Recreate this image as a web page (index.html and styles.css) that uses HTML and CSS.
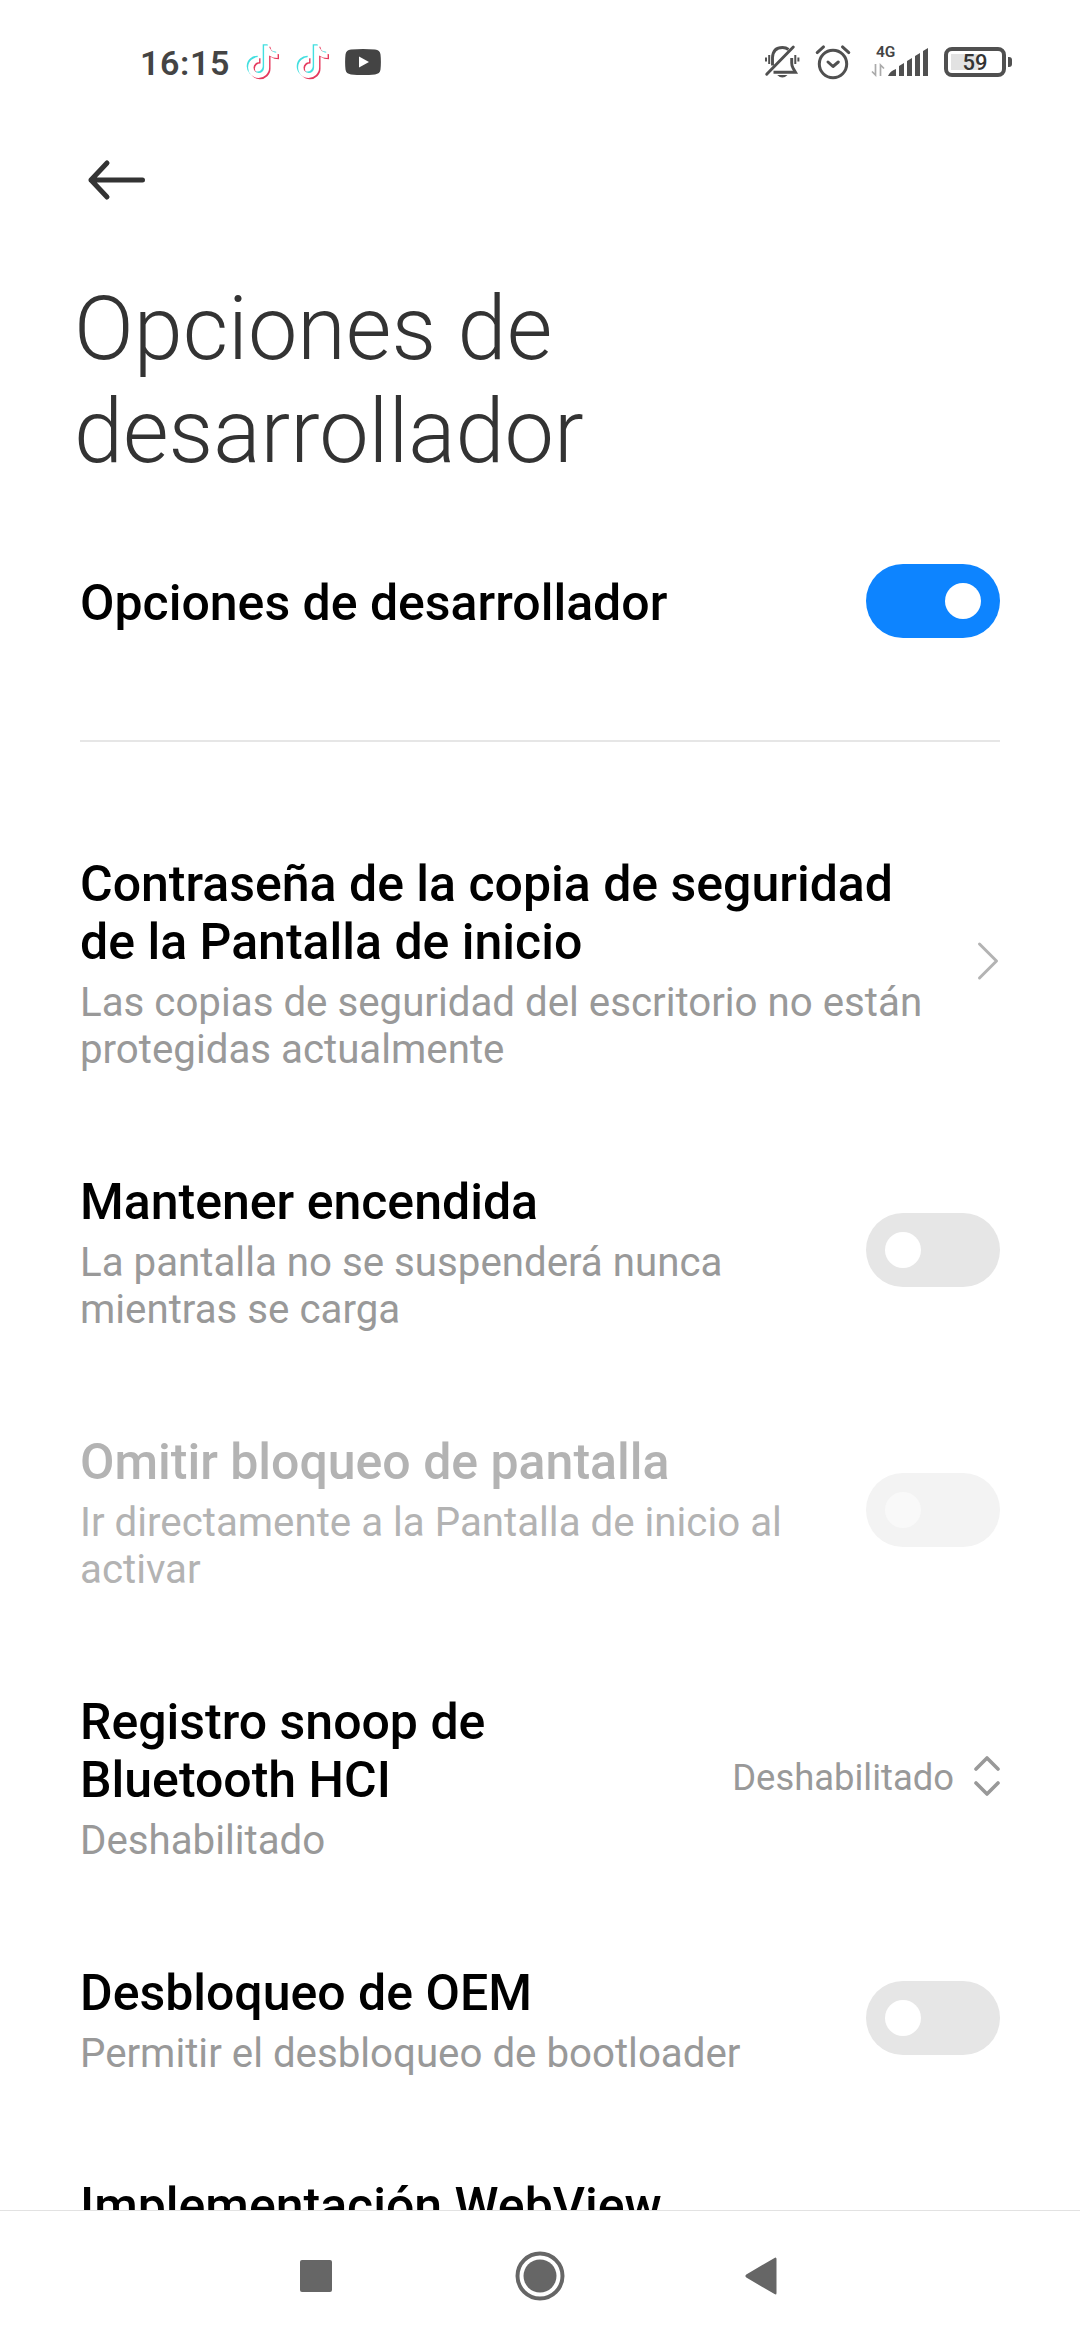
FILE: index.html
```html
<!DOCTYPE html>
<html lang="es">
<head>
<meta charset="utf-8">
<title>Opciones de desarrollador</title>
<link rel="stylesheet" href="styles.css">
</head>
<body>
<header class="status">
  <span class="clock">16:15</span>
  <svg class="tiktok" viewBox="0 0 34 38">
    <defs><path id="note" d="M18 2.500h4.800q1 6.500 8.700 7.500v5q-5 0-8.500-2.600v12.100a10.500 10.500 0 1 1-10-10.500v5.200a5.300 5.300 0 1 0 5 5.300z"/></defs>
    <use href="#note" x="-1.300" y="-1.200" fill="#43dfe0"/>
    <use href="#note" x="1.500" y="1.300" fill="#e5395d"/>
    <use href="#note" x="0.100" y="0.100" fill="#fff"/>
  </svg>
  <svg class="tiktok" viewBox="0 0 34 38">
    <use href="#note" x="-1.300" y="-1.200" fill="#43dfe0"/>
    <use href="#note" x="1.500" y="1.300" fill="#e5395d"/>
    <use href="#note" x="0.100" y="0.100" fill="#fff"/>
  </svg>
  <svg class="youtube" viewBox="0 0 36 26">
    <path d="M6 .6q12-1.2 24 0 5 .4 5.500 5 .8 7.400 0 15-.5 4.400-5.500 4.800-12 1.200-24 0-5-.4-5.500-4.800-.8-7.600 0-15 .5-4.600 5.500-5z" fill="#444"/>
    <path d="M14 7.500l10 5.500-10 5.500z" fill="#fff"/>
  </svg>
  <span class="spacer"></span>
  <svg class="bell" viewBox="0 0 36 36" fill="none" stroke="#505050" stroke-width="2.900">
    <path d="M8.500 21.500V13.500Q9 3.500 18.500 3.500q3.500 0 6 2M27.700 14v5q0 3 1.300 5l2.500 4.200H9.500"/>
    <path d="M2.700 30.200L29.300 3" stroke-linecap="round"/>
    <path d="M2 13.500v4M5.200 11v9M31.300 11v9M34.400 13.500v4" stroke-width="2"/>
    <path d="M13.200 31h10.300q-5.100 5-10.300 0z" fill="#505050" stroke="none"/>
  </svg>
  <svg class="alarm" viewBox="0 0 36 36" fill="none" stroke="#505050" stroke-width="3" stroke-linecap="round" stroke-linejoin="round">
    <circle cx="18" cy="20" r="13.700"/>
    <path d="M13 18l5 4.500 5.300-4.500M2.200 8.600l6.300-5.700M33.800 8.600l-6.300-5.700"/>
  </svg>
  <div class="signal">
    <span class="net">4G</span>
    <svg viewBox="0 0 58 30">
      <path d="M4.500 17v11L1 24.500M9.500 29V18l3.500 3.500" fill="none" stroke="#aaa" stroke-width="1.700"/>
      <path d="M17 29q2-5 8-7v7zM28 19l5-3v13h-5zM36 14l5-3v18h-5zM44 9l5-3v23h-5zM52 4l5-3v28h-5z" fill="#505050"/>
    </svg>
  </div>
  <div class="battery"><span>59</span></div>
</header>

<div class="toolbar">
  <svg class="back" viewBox="0 0 60 44" fill="none" stroke="#333" stroke-width="5" stroke-linecap="round" stroke-linejoin="round">
    <path d="M56.500 22H5M21 5L5 22l16 17"/>
  </svg>
</div>
<h1>Opciones de desarrollador</h1>

<main>
  <section class="row master">
    <div class="text"><h2>Opciones de desarrollador</h2></div>
    <span class="switch on"></span>
  </section>
  <hr>
  <section class="row">
    <div class="text">
      <h2>Contraseña de la copia de seguridad de la Pantalla de inicio</h2>
      <p>Las copias de seguridad del escritorio no están protegidas actualmente</p>
    </div>
    <svg class="chevron" viewBox="0 0 24 40" fill="none" stroke="#b3b3b3" stroke-width="3" stroke-linecap="round" stroke-linejoin="round"><path d="M3.500 3l17 17-17 17"/></svg>
  </section>
  <section class="row">
    <div class="text">
      <h2>Mantener encendida</h2>
      <p>La pantalla no se suspenderá nunca mientras se carga</p>
    </div>
    <span class="switch"></span>
  </section>
  <section class="row disabled">
    <div class="text">
      <h2>Omitir bloqueo de pantalla</h2>
      <p>Ir directamente a la Pantalla de inicio al activar</p>
    </div>
    <span class="switch"></span>
  </section>
  <section class="row choice">
    <div class="text">
      <h2>Registro snoop de Bluetooth HCI</h2>
      <p>Deshabilitado</p>
    </div>
    <span class="value">Deshabilitado</span>
    <svg class="updown" viewBox="0 0 26 42" fill="none" stroke="#999" stroke-width="3.600" stroke-linecap="round" stroke-linejoin="round"><path d="M2 14L13 3l11 11M2 28l11 11 11-11"/></svg>
  </section>
  <section class="row">
    <div class="text">
      <h2>Desbloqueo de OEM</h2>
      <p>Permitir el desbloqueo de bootloader</p>
    </div>
    <span class="switch"></span>
  </section>
  <section class="row">
    <div class="text"><h2>Implementación WebView</h2></div>
  </section>
</main>

<nav>
  <svg class="recents" viewBox="0 0 32 32"><rect width="32" height="32" rx="2" fill="#666"/></svg>
  <svg class="home" viewBox="0 0 50 50"><circle cx="25" cy="25" r="22.500" fill="none" stroke="#666" stroke-width="4"/><circle cx="25" cy="25" r="16.500" fill="#666"/></svg>
  <svg class="prev" viewBox="0 0 32 38"><path d="M29.500.9Q31.500-.3 31.500 2v34q0 2.300-2 1.100L1.300 20.500q-1.800-1.500 0-3z" fill="#666"/></svg>
</nav>
</body>
</html>
```
FILE: styles.css
```css
* { box-sizing: border-box; }
body {
  margin: 0;
  width: 1080px;
  height: 2340px;
  display: flex;
  flex-direction: column;
  overflow: hidden;
  background: #fff;
  color: #000;
  font-family: Roboto, sans-serif;
}
svg { display: block; flex: none; }

.status {
  flex: none;
  height: 124px;
  padding: 0 68px 0 140px;
  display: flex;
  align-items: center;
}
.clock {
  width: 106px;
  font-size: 34px;
  font-weight: 600;
  letter-spacing: 0.6px;
  line-height: 40px;
  padding-top: 1px;
  color: #444;
}
.tiktok { width: 34px; height: 38px; margin-right: 16px; }
.youtube { width: 36px; height: 26px; margin-left: -1px; }
.spacer { flex: 1; }
.bell { width: 36px; height: 36px; margin-right: 15px; }
.alarm { width: 36px; height: 36px; margin-right: 20px; }
.signal { position: relative; width: 58px; height: 30px; margin-right: 15px; }
.signal svg { width: 58px; height: 30px; }
.net {
  position: absolute;
  left: 5px;
  top: -4px;
  font-size: 15.5px;
  line-height: 18px;
  font-weight: 600;
  color: #444;
}
.battery {
  position: relative;
  width: 62px;
  height: 30px;
  margin-right: 6px;
  border: 4px solid #505050;
  border-radius: 8px;
  background: linear-gradient(#e2e2e2, #e2e2e2) 3px 3px / 28px 16px no-repeat;
  text-align: center;
  font-size: 22px;
  line-height: 24px;
  font-weight: 500;
  color: #333;
}
.battery::after {
  content: "";
  position: absolute;
  right: -10px;
  top: 6px;
  width: 4px;
  height: 10px;
  border-radius: 0 3px 3px 0;
  background: #505050;
}

.toolbar { flex: none; height: 154px; padding: 34px 86px 0; }
.back { width: 60px; height: 44px; }

h1 {
  flex: none;
  margin: 0 0 1px;
  width: 700px;
  padding-left: 74px;
  font-size: 88.2px;
  line-height: 103px;
  font-weight: 300;
  color: #333;
}

main { flex: 1; min-height: 0; overflow: hidden; padding: 0 80px; }
.row { display: flex; align-items: center; padding: 47px 0; }
.text { flex: 1; margin-top: 6px; padding-right: 60px; }
.text:has(+ .chevron) { padding-right: 40px; }
.master { padding: 79px 0 102px; }
.master .text { margin-top: 4px; }
hr { height: 2px; margin: 0 0 60px; border: 0; background: #e6e6e6; }
h2 { margin: 0; font-size: 50px; line-height: 58px; font-weight: 500; }
p { margin: 8px 0 0; font-size: 40.25px; line-height: 47px; color: #999; }
.choice .text { flex: none; width: 480px; }

.switch {
  flex: none;
  width: 134px;
  height: 74px;
  padding: 19px;
  border-radius: 37px;
  background: #e6e6e6;
  display: flex;
}
.switch::before {
  content: "";
  width: 36px;
  height: 36px;
  border-radius: 50%;
  background: #fff;
}
.switch.on { background: #0d84ff; justify-content: flex-end; }
.disabled h2, .disabled p { color: #b3b3b3; }
.disabled .switch { background: #f3f3f3; }
.disabled .switch::before { background: #f9f9f9; }
.chevron { width: 24px; height: 40px; }
.value {
  flex: 1;
  padding-top: 4px;
  margin-right: 20px;
  text-align: right;
  font-size: 36.4px;
  line-height: 42px;
  color: #999;
}
.updown { width: 26px; height: 42px; }

nav {
  flex: none;
  height: 130px;
  border-top: 1px solid #e2e2e2;
  padding-left: 300px;
  display: flex;
  align-items: center;
}
.recents { width: 32px; height: 32px; }
.home { width: 50px; height: 50px; margin: 0 180px 0 183px; }
.prev { width: 32px; height: 38px; }
```
